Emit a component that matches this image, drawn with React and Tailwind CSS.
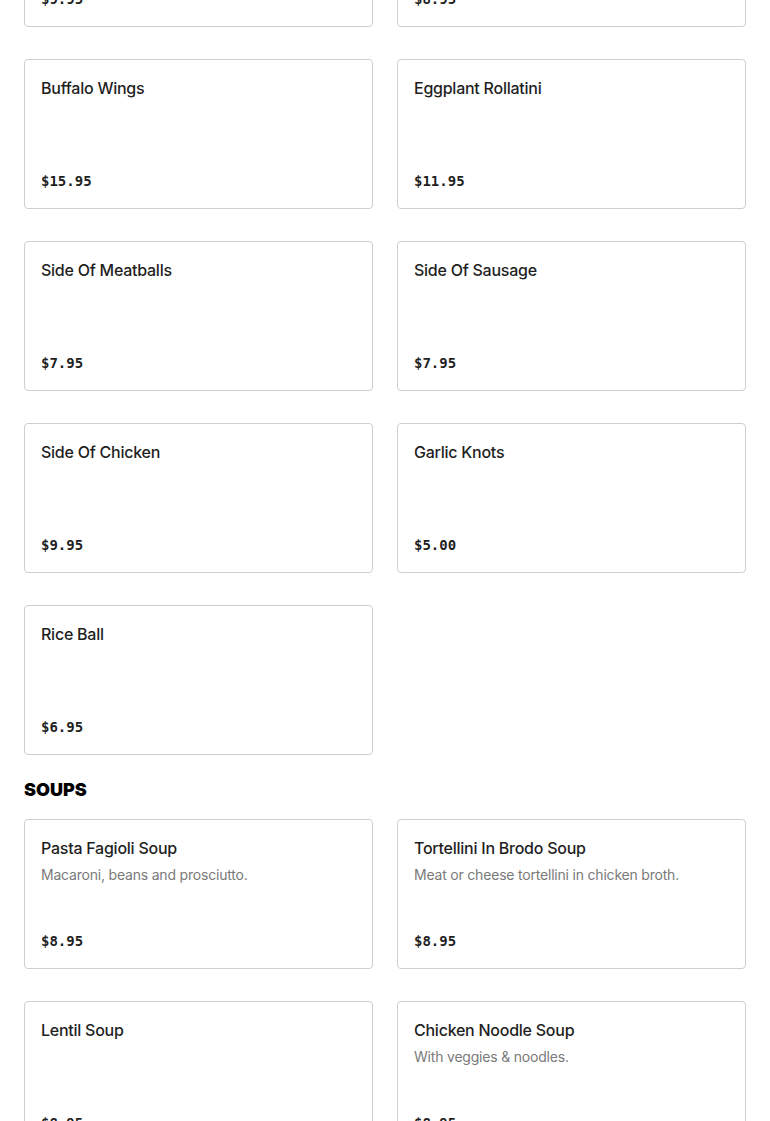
const appetizers = [
    { name: "Fried Calamari", price: "$9.95" },
    { name: "Mozzarella Sticks", price: "$8.95" },
    { name: "Buffalo Wings", price: "$15.95" },
    { name: "Eggplant Rollatini", price: "$11.95" },
    { name: "Side Of Meatballs", price: "$7.95" },
    { name: "Side Of Sausage", price: "$7.95" },
    { name: "Side Of Chicken", price: "$9.95" },
    { name: "Garlic Knots", price: "$5.00" },
    { name: "Rice Ball", price: "$6.95" },
];

const soups = [
    { name: "Pasta Fagioli Soup", description: "Macaroni, beans and prosciutto.", price: "$8.95" },
    { name: "Tortellini In Brodo Soup", description: "Meat or cheese tortellini in chicken broth.", price: "$8.95" },
    { name: "Lentil Soup", price: "$8.95" },
    { name: "Chicken Noodle Soup", description: "With veggies & noodles.", price: "$8.95" },
];

const MenuCard = ({ item }) => (
    <div className="flex h-[150px] flex-col rounded border border-[#cfcfcf] bg-white px-4 pt-4 pb-[17px]">
        <h3 className="text-base leading-6 font-medium tracking-[-0.25px] text-[#1f1f1f]">{item.name}</h3>
        {item.description && (
            <p className="mt-[5px] text-sm leading-5 tracking-[-0.2px] text-[#7a7a7a]">{item.description}</p>
        )}
        <p className="mt-auto font-['DejaVu_Sans_Mono',monospace] text-sm leading-5 font-semibold text-[#1f1f1f]">
            {item.price}
        </p>
    </div>
);

const App = () => {
    return (
        <div className="h-[1121px] overflow-hidden bg-white font-['Inter',sans-serif]">
            <div className="-mt-[123px] px-6">
                <div className="grid grid-cols-2 gap-x-6 gap-y-8">
                    {appetizers.map((item) => (
                        <MenuCard key={item.name} item={item} />
                    ))}
                </div>
                <h2 className="mt-[25px] mb-[19px] text-lg leading-5 font-black text-black">SOUPS</h2>
                <div className="grid grid-cols-2 gap-x-6 gap-y-8">
                    {soups.map((item) => (
                        <MenuCard key={item.name} item={item} />
                    ))}
                </div>
            </div>
        </div>
    );
};

export default App;
